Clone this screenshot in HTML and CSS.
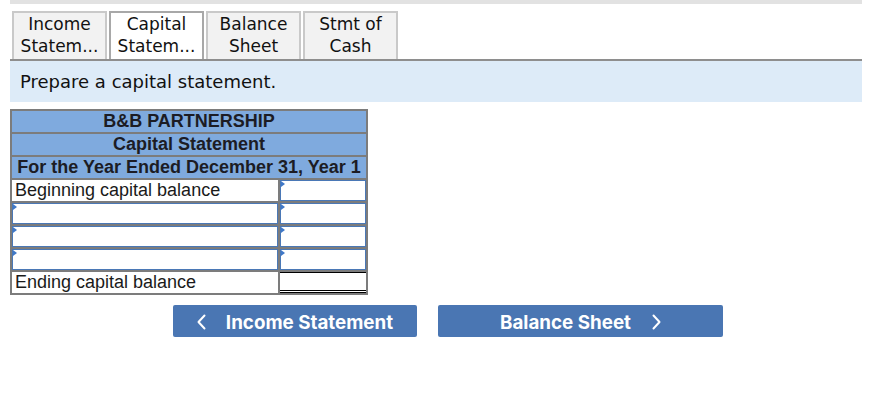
FILE: index.html
```html
<!DOCTYPE html>
<html>
<head>
<meta charset="utf-8">
<link rel="stylesheet" href="styles.css">
</head>
<body>
<div class="page">
  <div class="topbar"></div>
  <div class="tabs">
    <div class="tab">Income<br>Statem...</div>
    <div class="tab active">Capital<br>Statem...</div>
    <div class="tab">Balance<br>Sheet</div>
    <div class="tab">Stmt of<br>Cash</div>
  </div>
  <div class="instr">Prepare a capital statement.</div>
  <div class="sheet">
    <div class="hdr">B&amp;B PARTNERSHIP</div>
    <div class="hdr">Capital Statement</div>
    <div class="hdr">For the Year Ended December 31, Year 1</div>
    <div class="cell label">Beginning capital balance</div>
    <div class="cell input"></div>
    <div class="cell input"></div>
    <div class="cell input"></div>
    <div class="cell input"></div>
    <div class="cell input"></div>
    <div class="cell input"></div>
    <div class="cell input"></div>
    <div class="cell label">Ending capital balance</div>
    <div class="cell total"></div>
  </div>
  <div class="nav">
    <button class="btn prev"><svg class="chev" width="9" height="16" viewBox="0 0 9 16"><polyline points="7.5,1.5 1.5,8 7.5,14.5" fill="none" stroke="#fff" stroke-width="2" stroke-linecap="round" stroke-linejoin="round"/></svg>Income Statement</button>
    <button class="btn next">Balance Sheet<svg class="chev" width="9" height="16" viewBox="0 0 9 16"><polyline points="1.5,1.5 7.5,8 1.5,14.5" fill="none" stroke="#fff" stroke-width="2" stroke-linecap="round" stroke-linejoin="round"/></svg></button>
  </div>
</div>
</body>
</html>
```

FILE: styles.css
```css
html, body {
  margin: 0;
  padding: 0;
  background: #fff;
}
.page {
  width: 852px;
  margin-left: 10px;
}
.topbar {
  height: 4px;
  background: #e2e2e2;
}
.tabs {
  display: flex;
  gap: 2px;
  margin-top: 7px;
  padding-left: 2px;
  border-bottom: 2px solid #8e8e8e;
}
.tab {
  width: 91px;
  height: 44px;
  border: 2px solid #c9c9c9;
  border-bottom: none;
  padding-bottom: 2px;
  background: #f2f2f2;
  font-family: "DejaVu Sans", Verdana, sans-serif;
  font-size: 17px;
  line-height: 22px;
  text-align: center;
  color: #111;
}
.tab.active {
  background: #fff;
  border-color: #a8a8a8;
}
.instr {
  height: 41px;
  background: #ddebf8;
  padding-left: 10px;
  font-family: "DejaVu Sans", Verdana, sans-serif;
  font-size: 18px;
  line-height: 42px;
  color: #111;
}
.sheet {
  margin-top: 7px;
  width: 354px;
  display: grid;
  grid-template-columns: 266px 86px;
  gap: 2px;
  padding: 2px;
  background: #7c7c7c;
  font-family: "Liberation Sans", Arial, sans-serif;
  font-size: 18px;
}
.hdr {
  grid-column: 1 / 3;
  height: 21px;
  line-height: 21px;
  background: #7faade;
  text-align: center;
  font-weight: bold;
  color: #1c1c24;
}
.cell {
  height: 21px;
  line-height: 21px;
  background: #fff;
  box-sizing: border-box;
  position: relative;
  color: #1a1a1a;
}
.label {
  padding-left: 3px;
}
.input {
  border: 1px solid #4a78b6;
}
.input::before {
  content: "";
  position: absolute;
  left: 0;
  top: 0;
  border-left: 4px solid #3f78c8;
  border-top: 3px solid transparent;
  border-bottom: 3px solid transparent;
}
.total {
  border-top: 1px solid #000;
  border-bottom: 3px double #000;
}
.nav {
  display: flex;
  gap: 21px;
  margin-top: 10px;
  padding-left: 163px;
}
.btn {
  height: 32px;
  border: none;
  border-radius: 2px;
  background: #4a76b3;
  color: #fff;
  font-family: Inter, Roboto, sans-serif;
  font-weight: bold;
  font-size: 18.8px;
  display: flex;
  align-items: center;
  justify-content: center;
  padding: 2px 0 0;
}
.prev {
  width: 244px;
}
.next {
  width: 285px;
}
.prev .chev {
  margin-right: 20px;
}
.next .chev {
  margin-left: 21px;
}
```
